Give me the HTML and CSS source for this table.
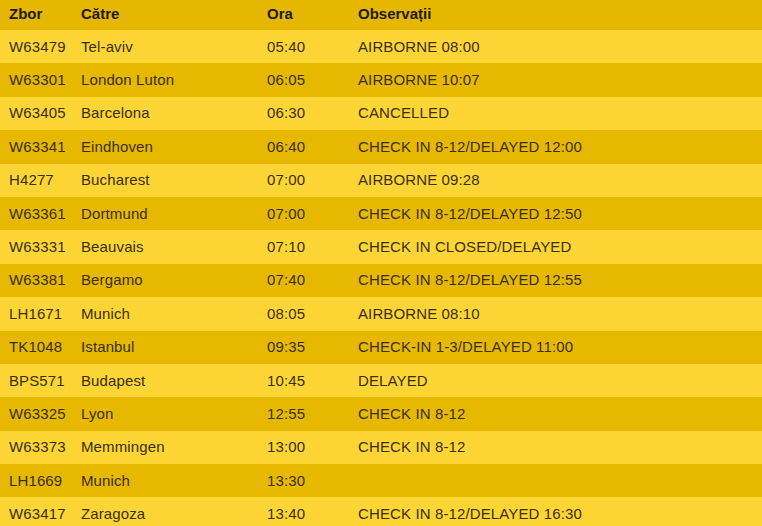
FILE: index.html
```html
<!DOCTYPE html>
<html lang="ro">
<head>
<meta charset="utf-8">
<link rel="stylesheet" href="styles.css">
</head>
<body>
<div class="board">
  <div class="row head"><span>Zbor</span><span>Către</span><span>Ora</span><span>Observații</span></div>
  <div class="row light"><span>W63479</span><span>Tel-aviv</span><span>05:40</span><span>AIRBORNE 08:00</span></div>
  <div class="row dark"><span>W63301</span><span>London Luton</span><span>06:05</span><span>AIRBORNE 10:07</span></div>
  <div class="row light"><span>W63405</span><span>Barcelona</span><span>06:30</span><span>CANCELLED</span></div>
  <div class="row dark"><span>W63341</span><span>Eindhoven</span><span>06:40</span><span>CHECK IN 8-12/DELAYED 12:00</span></div>
  <div class="row light"><span>H4277</span><span>Bucharest</span><span>07:00</span><span>AIRBORNE 09:28</span></div>
  <div class="row dark"><span>W63361</span><span>Dortmund</span><span>07:00</span><span>CHECK IN 8-12/DELAYED 12:50</span></div>
  <div class="row light"><span>W63331</span><span>Beauvais</span><span>07:10</span><span>CHECK IN CLOSED/DELAYED</span></div>
  <div class="row dark"><span>W63381</span><span>Bergamo</span><span>07:40</span><span>CHECK IN 8-12/DELAYED 12:55</span></div>
  <div class="row light"><span>LH1671</span><span>Munich</span><span>08:05</span><span>AIRBORNE 08:10</span></div>
  <div class="row dark"><span>TK1048</span><span>Istanbul</span><span>09:35</span><span>CHECK-IN 1-3/DELAYED 11:00</span></div>
  <div class="row light"><span>BPS571</span><span>Budapest</span><span>10:45</span><span>DELAYED</span></div>
  <div class="row dark"><span>W63325</span><span>Lyon</span><span>12:55</span><span>CHECK IN 8-12</span></div>
  <div class="row light"><span>W63373</span><span>Memmingen</span><span>13:00</span><span>CHECK IN 8-12</span></div>
  <div class="row dark"><span>LH1669</span><span>Munich</span><span>13:30</span><span></span></div>
  <div class="row light"><span>W63417</span><span>Zaragoza</span><span>13:40</span><span>CHECK IN 8-12/DELAYED 16:30</span></div>
</div>
</body>
</html>
```

FILE: styles.css
```css
html, body {
  margin: 0;
  padding: 0;
  background: #fdd635;
  overflow: hidden;
}
.board {
  font-family: "Liberation Sans", Arial, sans-serif;
  font-size: 15px;
  letter-spacing: 0.12px;
  color: #3b2f00;
  width: 762px;
}
.row {
  display: grid;
  grid-template-columns: 72px 186px 91px 1fr;
  align-items: center;
  height: 33.4px;
  padding-left: 9px;
  padding-bottom: 1px;
  box-sizing: border-box;
}
.row.head {
  height: 30px;
  background: #e5b700;
  font-weight: bold;
  letter-spacing: 0;
  color: #221a00;
  padding-bottom: 3px;
}
.row.light { background: #fdd635; }
.row.dark { background: #e6b900; }
```
